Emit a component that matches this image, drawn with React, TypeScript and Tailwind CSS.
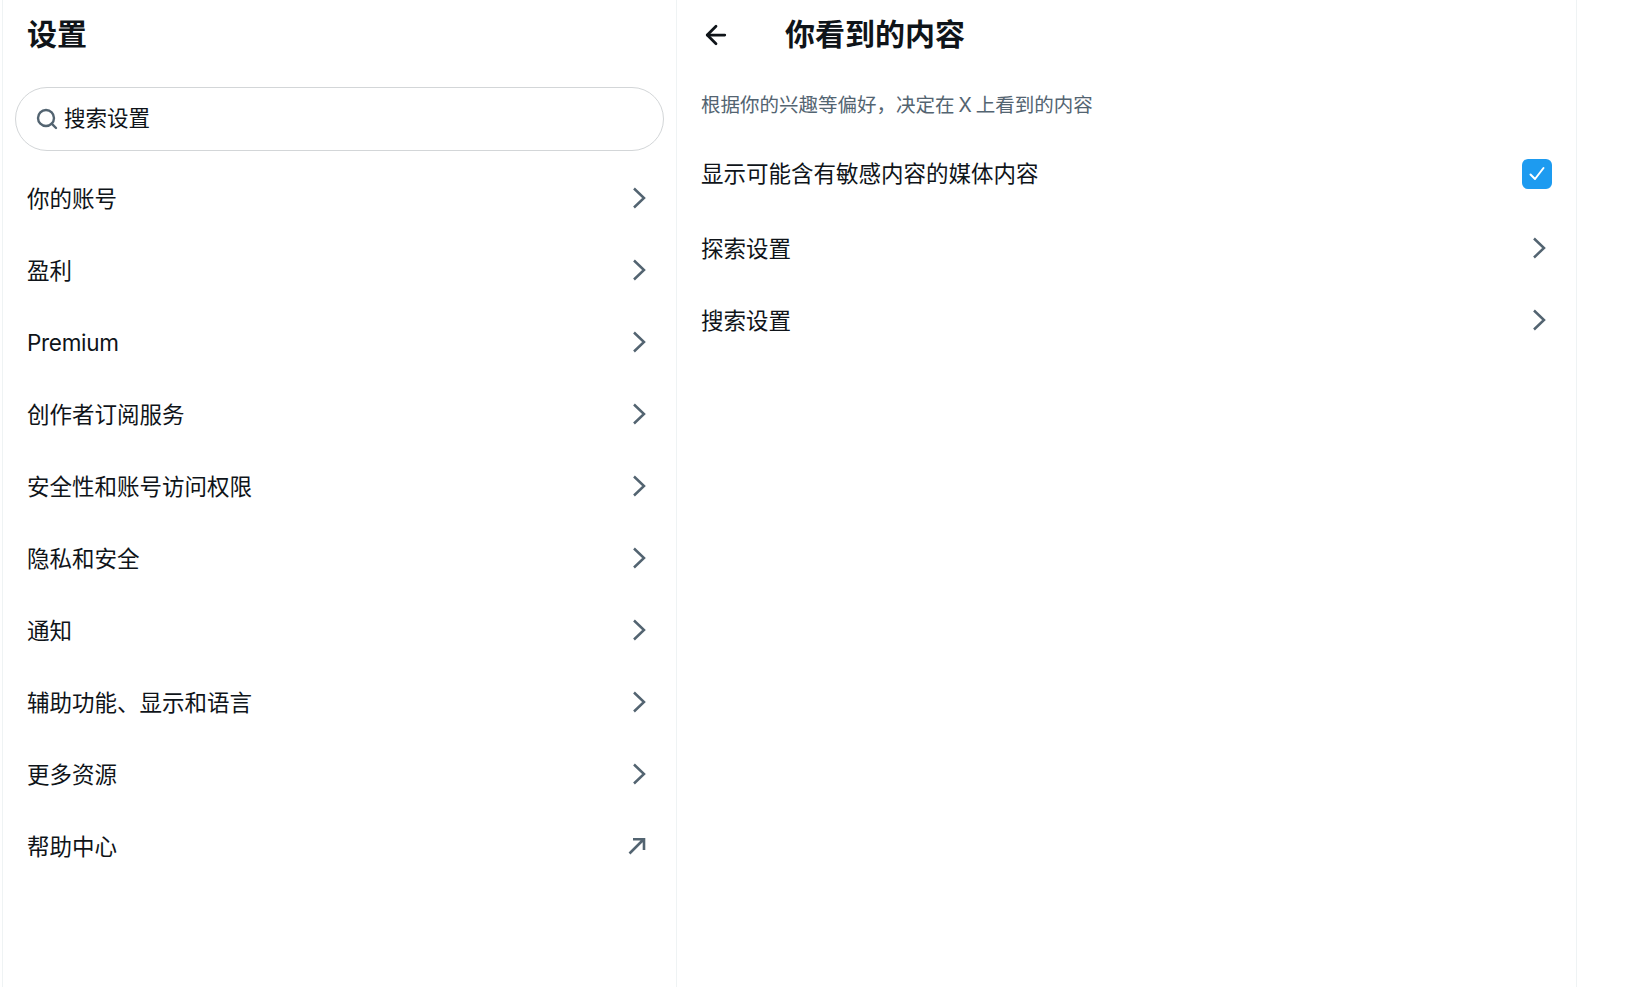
import { Search, ArrowLeft } from "lucide-react";

const font = "[font-family:Inter,'Noto_Sans_CJK_SC',sans-serif]";

const items = ["你的账号", "盈利", "Premium", "创作者订阅服务", "安全性和账号访问权限", "隐私和安全", "通知", "辅助功能、显示和语言", "更多资源"];

function Chevron() {
  return (
    <svg width="14" height="22" viewBox="0 0 14 22" fill="none" stroke="#536471" strokeWidth="2.5" strokeLinejoin="miter" className="mb-[2px]">
      <path d="M2 1.5 L12 11 L2 20.5" />
    </svg>
  );
}

function Row({ label, external }: { label: string; external?: boolean }) {
  return (
    <div className="flex h-[72px] items-center justify-between">
      <span className={`text-[22.5px] leading-none text-[#0f1419] ${label === "Premium" ? "tracking-[-0.3px]" : ""}`}>{label}</span>
      {external ? (
        <svg width="18" height="18" viewBox="0 0 18 18" fill="none" stroke="#536471" strokeWidth="2.6" className="mb-[2px]">
          <path d="M1.5 16.5 L15.5 2.5 M5 2.2 H16 V13" />
        </svg>
      ) : (
        <Chevron />
      )}
    </div>
  );
}

export default function App() {
  return (
    <div className={`flex h-[987px] w-[1630px] overflow-hidden bg-white ${font}`}>
      <div className="ml-[2px] flex w-[675px] flex-col border-x border-[#eff3f4]">
        <div className="flex h-[70px] items-center pb-[2px] pl-[24px]">
          <h1 className="text-[30px] font-bold leading-none text-[#0f1419]">设置</h1>
        </div>
        <div className="mx-[12px] mt-[17px] flex h-[64px] w-[649px] items-center rounded-full border border-[#d3d6d8] pl-[19px]">
          <Search size={24} color="#536471" strokeWidth={2.4} />
          <span className="mb-[1px] ml-[5px] text-[21.5px] leading-none text-[#0f1419]">搜索设置</span>
        </div>
        <div className="mt-[12px] pl-[24px] pr-[30px]">
          {items.map((t) => (
            <Row key={t} label={t} />
          ))}
          <Row label="帮助中心" external />
        </div>
      </div>
      <div className="flex w-[900px] flex-col border-r border-[#eff3f4]">
        <div className="flex h-[70px] items-center pl-[24px]">
          <ArrowLeft size={30} color="#0f1419" strokeWidth={2.2} />
          <h2 className="mb-[2px] ml-[54px] text-[30px] font-bold leading-none text-[#0f1419]">你看到的内容</h2>
        </div>
        <div className="px-[24px]">
          <p className="mt-[24px] text-[19.5px] leading-[22px] text-[#536471] [word-spacing:-1.5px]">根据你的兴趣等偏好，决定在 X 上看到的内容</p>
          <div className="mt-[25px] mb-[6px] flex h-[66px] items-center justify-between">
            <span className="text-[22.5px] leading-none text-[#0f1419]">显示可能含有敏感内容的媒体内容</span>
            <div className="flex h-[30px] w-[30px] items-center justify-center rounded-md bg-[#1d9bf0]">
              <svg width="18" height="18" viewBox="0 0 18 18" fill="none" stroke="white" strokeWidth="2" strokeLinecap="round" strokeLinejoin="round">
                <path d="M2.5 9.5 L7 14 L15.5 3" />
              </svg>
            </div>
          </div>
          <div className="pr-[6px]">
            <Row label="探索设置" />
            <Row label="搜索设置" />
          </div>
        </div>
      </div>
    </div>
  );
}
